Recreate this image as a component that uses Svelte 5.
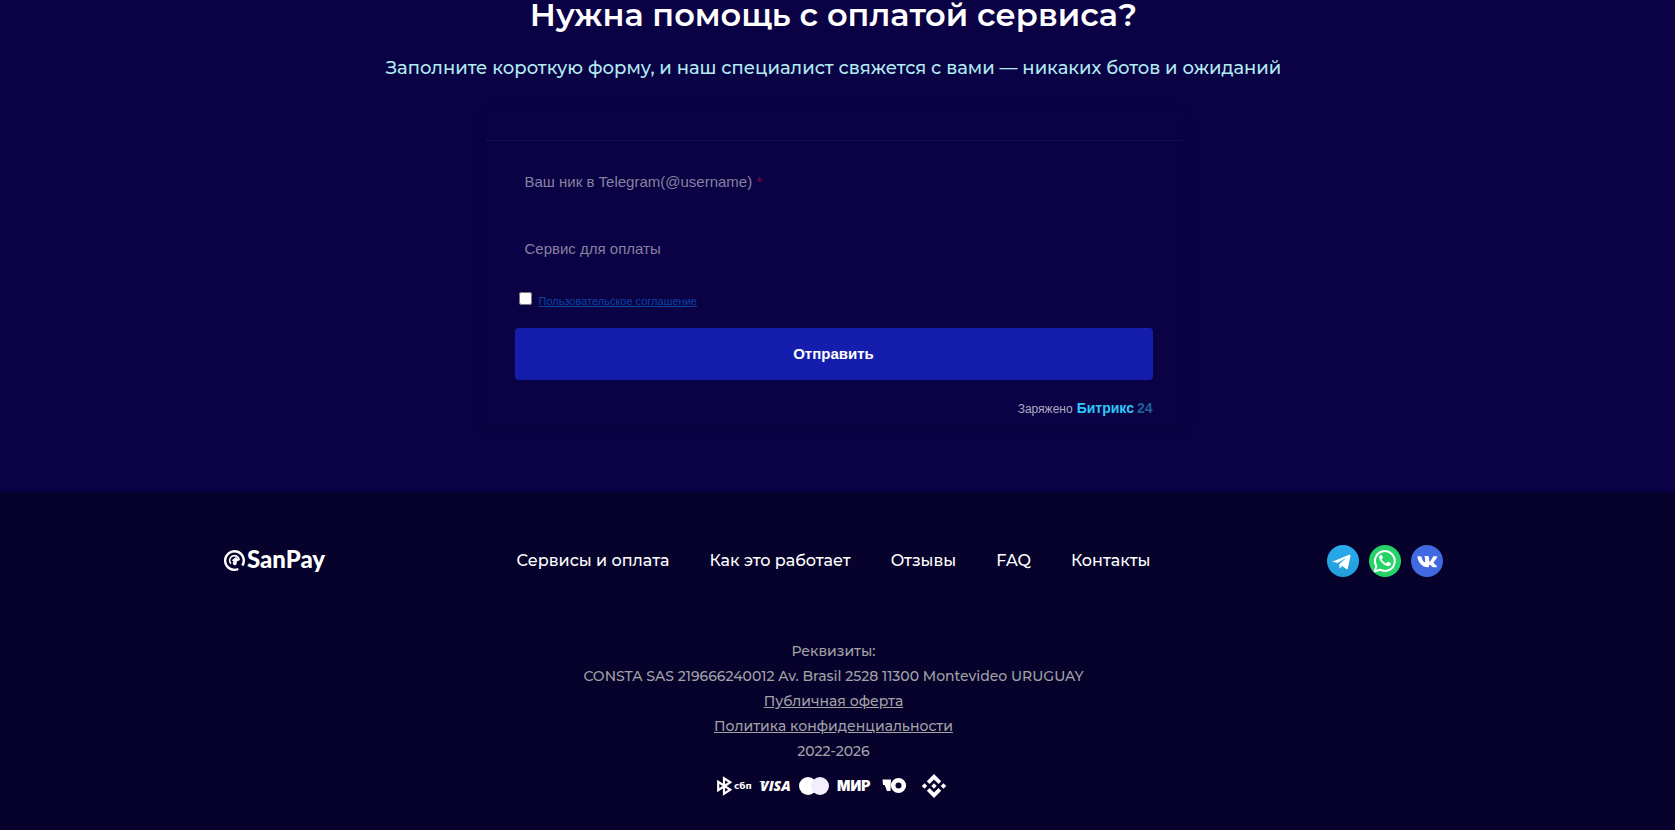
<script lang="ts">
  const navLinks = ['Сервисы и оплата', 'Как это работает', 'Отзывы', 'FAQ', 'Контакты'];

  let username = $state('');
  let service = $state('');
  let agreed = $state(false);

  function submit(event: SubmitEvent) {
    event.preventDefault();
  }
</script>

<div class="page">
  <section class="help">
    <h2>Нужна помощь с оплатой сервиса?</h2>
    <p class="lead">
      Заполните короткую форму, и наш специалист свяжется с вами — никаких ботов и ожиданий
    </p>

    <form class="card" onsubmit={submit}>
      <div class="card-header"></div>
      <div class="card-body">
        <div class="field">
          <label for="username">Ваш ник в Telegram(@username) <span class="required">*</span></label>
          <input id="username" type="text" bind:value={username} />
        </div>
        <div class="field">
          <label for="service">Сервис для оплаты</label>
          <input id="service" type="text" bind:value={service} />
        </div>
        <div class="agreement">
          <input type="checkbox" aria-labelledby="agreement-link" bind:checked={agreed} />
          <a id="agreement-link" href="#agreement">Пользовательское соглашение</a>
        </div>
        <button class="submit" type="submit">Отправить</button>
        <div class="powered">
          <span>Заряжено</span>
          <a href="#bitrix">Битрикс<span class="num">24</span></a>
        </div>
      </div>
    </form>
  </section>

  <footer>
    <div class="footer-top">
      <a class="logo" href="#top" aria-label="SanPay">
        <svg viewBox="0 0 106 36" width="106" height="36">
          <path
            d="M14.300 26A9.300 9.300 0 1 1 18.300 22.500"
            fill="none"
            stroke="#fff"
            stroke-width="2.400"
          />
          <path
            d="M7 20.800a4.800 4.800 0 1 1 8.200-3.800"
            fill="none"
            stroke="#fff"
            stroke-width="1.600"
          />
          <path d="M7.800 17.200 12 14l3.600 3.400-2.600.8-.6 3.200-1.800 1.200-2-1.800.8-2.400z" fill="#fff" />
          <text x="23" y="25">SanPay</text>
        </svg>
      </a>

      <nav>
        {#each navLinks as link}
          <a href="#{link}">{link}</a>
        {/each}
      </nav>

      <div class="social">
        <a href="#telegram" aria-label="Telegram">
          <svg viewBox="0 0 32 32" width="32" height="32">
            <defs>
              <linearGradient id="tg" x1="0" y1="0" x2="0" y2="1">
                <stop offset="0" stop-color="#2aabee" />
                <stop offset="1" stop-color="#229ed9" />
              </linearGradient>
            </defs>
            <circle cx="16" cy="16" r="16" fill="url(#tg)" />
            <path
              d="M5.800 16.400 22.200 9.800c.8-.3 1.500.2 1.200 1.400L20.800 23.400c-.2.9-.8 1.100-1.500.7l-4.100-3-2 1.900c-.4.4-.8.3-.8-.4v-3.500l7.300-6.600-9.100 5.600-4.600-1.300c-.9-.3-.9-1-.2-1.400z"
              fill="#fff"
            />
          </svg>
        </a>
        <a href="#whatsapp" aria-label="WhatsApp">
          <svg viewBox="0 0 32 32" width="32" height="32">
            <circle cx="16" cy="16" r="16" fill="#25d366" />
            <path
              d="m5.800 26.200 1.500-5.200a9.900 9.900 0 1 1 3.800 3.700z"
              fill="none"
              stroke="#fff"
              stroke-width="2"
              stroke-linejoin="round"
            />
            <path
              d="M12.900 10.800c-.3-.7-.5-.7-1-.7-.5 0-1.300.4-1.700 1.800-.3 1.600.8 3.400 2.200 5.100 1.800 2.100 4.200 3.900 6.600 4.100 1.500.1 2.800-.9 3-2.200.1-.5 0-.8-.4-1l-2.200-1.100c-.4-.2-.7-.1-1 .3l-.8 1c-.3.3-.5.3-.9.1-1.600-.7-3-2-3.800-3.500-.2-.4-.1-.6.2-.9l.7-.9c.2-.3.1-.6 0-.8z"
              fill="#fff"
            />
          </svg>
        </a>
        <a href="#vk" aria-label="VK">
          <svg viewBox="0 0 32 32" width="32" height="32">
            <circle cx="16" cy="16" r="16" fill="#4169e1" />
            <path
              d="M16.700 22.200c-5.600 0-8.900-4-10.400-10.100-.1-.6.2-.9.7-.9h2.600c.5 0 .8.2.9.7.7 2.600 1.800 4.700 2.900 5.200.6.2.7-.1.7-.8v-2.700c0-1-.4-1.300-1.100-1.500.3-.7 1.100-1.100 2.600-1.100 1.900 0 2.500.4 2.500 1.900v3.100c0 .8.5.9 1.100.3 1-1 1.900-2.500 2.600-4.200.2-.6.5-.9 1.100-.9h2.500c.8 0 1 .4.7 1.100-.7 1.500-1.900 3.200-3.200 4.500-.5.6-.5.9 0 1.400 1.200 1 2.300 2 2.900 3 .4.6.1 1-.6 1h-2.900c-.7 0-1-.2-1.400-.7-1-1.100-2-2-2.500-1.700-.4.2-.3.9-.4 1.600-.1.6-.5.8-1.300.8z"
              fill="#fff"
            />
          </svg>
        </a>
      </div>
    </div>

    <div class="details">
      <p>Реквизиты:</p>
      <p>CONSTA SAS 219666240012 Av. Brasil 2528 11300 Montevideo URUGUAY</p>
      <p><a href="#offer">Публичная оферта</a></p>
      <p><a href="#privacy">Политика конфиденциальности</a></p>
      <p>2022-2026</p>
    </div>

    <svg class="payments" viewBox="0 0 234 26" width="234" height="26">
      <g fill="#fff">
        <path
          d="M1.200 8.800v8.400L13.300 9.200 7 5.200v15.600l6.300-4z"
          fill="none"
          stroke="#fff"
          stroke-width="2.200"
        />
        <text class="sbp" x="17" y="16">сбп</text>
        <text class="visa" x="43" y="18">VISA</text>
        <path d="M42.500 8h5l1 3c-1.500-1.300-3.500-2.200-6-2.600z" />
        <circle cx="91" cy="13" r="9" />
        <circle cx="103" cy="13" r="9" fill="#f4edfc" />
        <text class="mir" x="120" y="18">МИР</text>
        <path d="M165.500 6.500h8.500l-.5 11.500h-3.500l-2.300-6h-1.700z" />
        <circle cx="181.500" cy="12.500" r="5.300" fill="none" stroke="#fff" stroke-width="4.600" />
        <path
          d="m217 1 7.200 7.200-2.700 2.700-4.500-4.500-4.500 4.500-2.700-2.700zM217 25l7.200-7.200-2.700-2.700-4.500 4.500-4.500-4.500-2.700 2.700zM217 10.300l2.700 2.700-2.700 2.700-2.700-2.700zM207.500 10.300l2.700 2.700-2.700 2.700-2.700-2.700zM226.500 10.300l2.700 2.700-2.700 2.700-2.700-2.700z"
        />
      </g>
    </svg>
  </footer>
</div>

<style>
  :global(body) {
    background: #06022c;
  }

  .page {
    padding-right: 8px;
    background: #0a0245;
    color: #fff;
    font-family: Montserrat, Inter, sans-serif;
    font-weight: 500;
  }

  .help {
    display: flex;
    flex-direction: column;
    align-items: center;
    padding-bottom: 66px;
  }

  h2 {
    margin: 0;
    font-size: 32px;
    font-weight: 600;
    line-height: 30px;
  }

  .lead {
    margin: 23px 0 26px;
    color: #b2ebf2;
    font-size: 18px;
    line-height: 30px;
  }

  .card {
    box-sizing: border-box;
    width: 100%;
    max-width: 698px;
    border-radius: 4px;
    box-shadow: 0 4px 12px rgba(0, 0, 0, 0.2);
    font-family: 'Liberation Sans', Arial, sans-serif;
    font-weight: 400;
  }

  .card-header {
    height: 31px;
    border-bottom: 1px solid #140c50;
  }

  .card-body {
    padding: 13px 30px 7px;
  }

  .field {
    position: relative;
    height: 56px;
    margin-bottom: 11px;
  }

  .field label {
    position: absolute;
    top: 18px;
    left: 10px;
    color: #86819f;
    font-size: 15px;
    line-height: 20px;
  }

  .field input {
    box-sizing: border-box;
    width: 100%;
    height: 100%;
    padding: 0 10px;
    border: 0;
    background: transparent;
    color: #fff;
    font: inherit;
  }

  .required {
    color: #85022d;
  }

  .agreement {
    display: flex;
    align-items: flex-start;
    gap: 7px;
    padding: 4px 4px 0;
    margin-bottom: 18px;
  }

  .agreement input {
    width: 13px;
    height: 13px;
    margin: 0;
  }

  .agreement a {
    color: #0b42a4;
    font-size: 11px;
    line-height: 18px;
  }

  .submit {
    display: block;
    width: 100%;
    height: 52px;
    padding: 0 0 2px;
    border: 0;
    border-radius: 4px;
    background: #151eac;
    color: #fff;
    font-family: inherit;
    font-size: 15px;
    font-weight: 700;
  }

  .powered {
    display: flex;
    align-items: baseline;
    justify-content: flex-end;
    gap: 4px;
    margin-top: 18px;
    color: #aeabc0;
    font-size: 12px;
    line-height: 20px;
  }

  .powered a {
    display: flex;
    gap: 3px;
    color: #2fc7f7;
    font-size: 14px;
    font-weight: 700;
    text-decoration: none;
  }

  .powered .num {
    color: #215f98;
  }

  footer {
    display: flex;
    flex-direction: column;
    align-items: center;
    margin-right: -8px;
    padding: 51px 8px 30px 0;
    background: #06022c;
  }

  .footer-top {
    display: grid;
    grid-template-columns: 1fr auto 1fr;
    align-items: center;
    width: 100%;
    max-width: 1219px;
    margin-bottom: 60px;
  }

  .logo {
    height: 36px;
  }

  .logo text {
    fill: #fff;
    font-family: Lato, sans-serif;
    font-size: 24px;
    font-weight: 900;
  }

  nav {
    display: flex;
    gap: 40px;
  }

  nav a {
    color: #fff;
    font-size: 16px;
    line-height: 24px;
    text-decoration: none;
  }

  .social {
    display: flex;
    justify-content: flex-end;
    gap: 10px;
  }

  .social a {
    height: 32px;
  }

  .details {
    color: #a2a1a6;
    font-size: 14px;
    line-height: 25px;
    text-align: center;
  }

  .details p {
    margin: 0;
  }

  .details a {
    color: inherit;
  }

  .payments {
    margin-top: 9px;
  }

  .sbp {
    font-family: 'DejaVu Sans', sans-serif;
    font-size: 9px;
    font-weight: 700;
  }

  .visa {
    font-family: 'Open Sans', sans-serif;
    font-size: 14px;
    font-style: italic;
    font-weight: 800;
  }

  .mir {
    font-family: Inter, sans-serif;
    font-size: 14px;
    font-weight: 900;
  }
</style>
